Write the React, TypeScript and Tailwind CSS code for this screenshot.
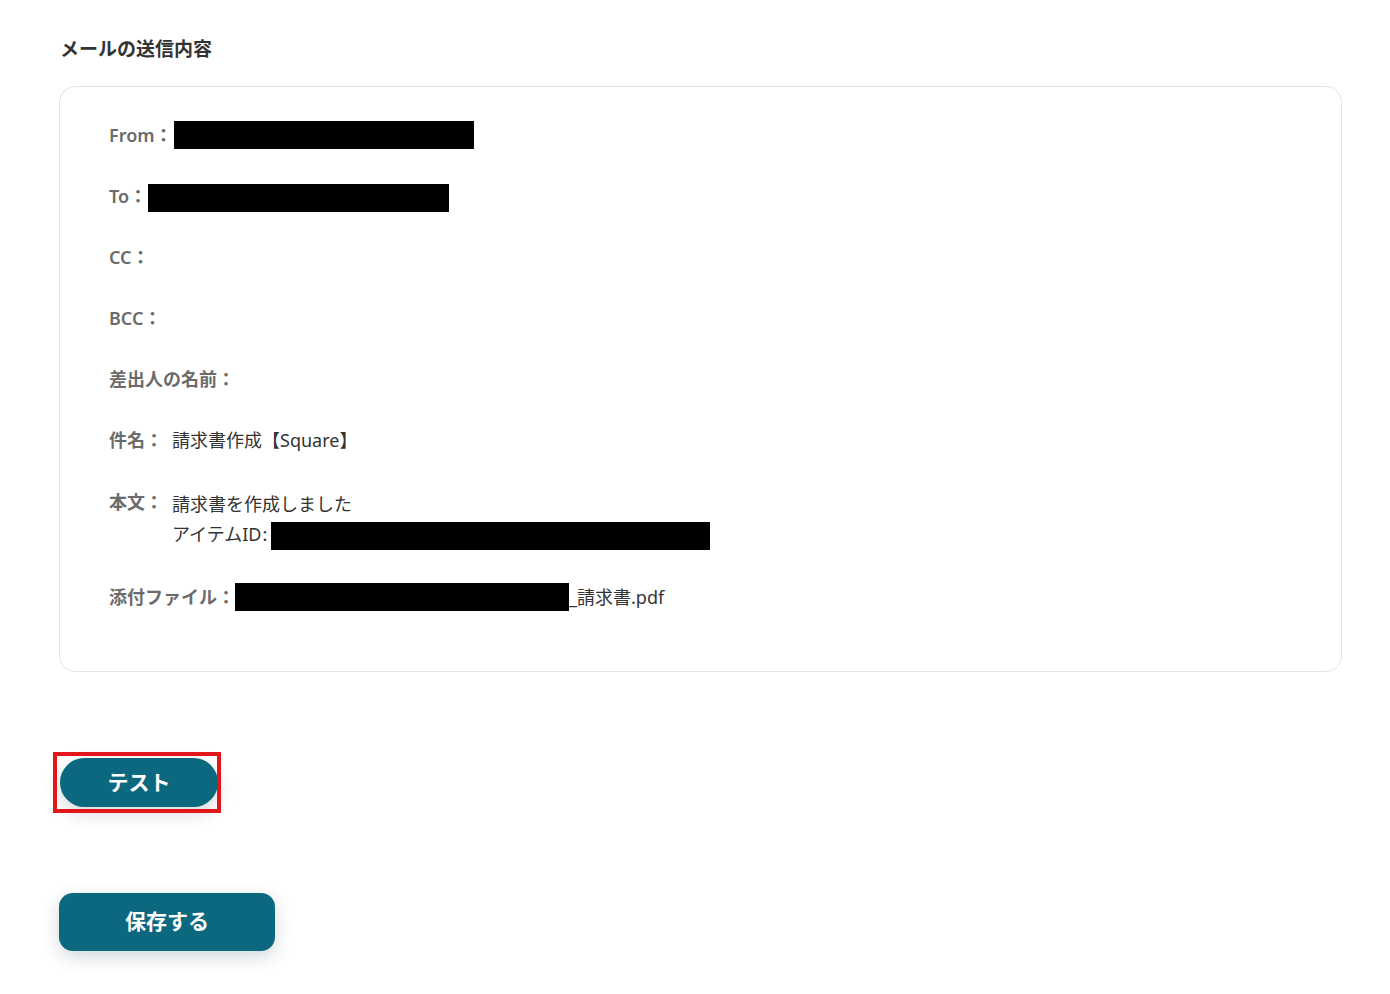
import React from "react";

const Box = ({ w }: { w: number }) => (
  <span className="inline-block h-[28px] bg-black align-middle" style={{ width: w }} />
);

function Row({ label, children, className = "" }: { label: string; children?: React.ReactNode; className?: string }) {
  return (
    <div className={"flex items-start leading-[30px] " + className}>
      <span className="shrink-0 font-semibold text-[#6b6b6b]">{label}</span>
      <div className="text-[#333]">{children}</div>
    </div>
  );
}

export default function App() {
  return (
    <div
      className="min-h-[994px] bg-white pl-[59px] pr-[48px] pt-[36px]"
      style={{ fontFamily: '"Noto Sans", "Noto Sans CJK JP", sans-serif' }}
    >
      <h2 className="pl-[1px] text-[19px] font-semibold leading-[26px] text-[#333]">メールの送信内容</h2>
      <div className="mt-[24px] rounded-[16px] border border-[#e3e3e3] pl-[49px] pt-[33px] pb-[59px] text-[18px]">
        <div className="flex flex-col gap-[31px]">
          <Row label="From：">
            <span className="ml-[1px] flex h-[30px] items-center"><Box w={300} /></span>
          </Row>
          <Row label="To：">
            <span className="ml-[1px] flex h-[30px] items-center pt-[4px]"><Box w={301} /></span>
          </Row>
          <Row label="CC：" />
          <Row label="BCC：" />
          <Row label="差出人の名前：" />
          <Row label="件名：">
            <span className="ml-[9px]">請求書作成【Square】</span>
          </Row>
          <Row label="本文：" className="mt-[1px]">
            <div className="ml-[9px] mt-[2px]">
              <div>請求書を作成しました</div>
              <div className="flex h-[30px] items-center">
                <span>アイテムID</span>
                <span className="ml-[1px]">:</span>
                <span className="ml-[4px]"><Box w={439} /></span>
              </div>
            </div>
          </Row>
          <Row label="添付ファイル：" className="mt-[2px]">
            <div className="flex h-[30px] items-center">
              <Box w={334} />
              <span>_請求書.pdf</span>
            </div>
          </Row>
        </div>
      </div>

      <div className="relative mt-[86px] ml-[1px] w-[158px]">
        <button className="flex h-[49px] w-[158px] items-center justify-center rounded-full bg-[#0b687f] text-[21px] font-bold text-white shadow-[0_6px_18px_rgba(0,40,60,0.18)]">
          テスト
        </button>
        <div className="pointer-events-none absolute -left-[7px] -top-[6px] h-[61px] w-[168px] border-[4px] border-[#e3161c]" />
      </div>

      <button className="mt-[86px] flex h-[58px] w-[216px] items-center justify-center rounded-[14px] bg-[#0b687f] text-[21px] font-bold text-white shadow-[0_6px_18px_rgba(0,40,60,0.18)]">
        保存する
      </button>
    </div>
  );
}
